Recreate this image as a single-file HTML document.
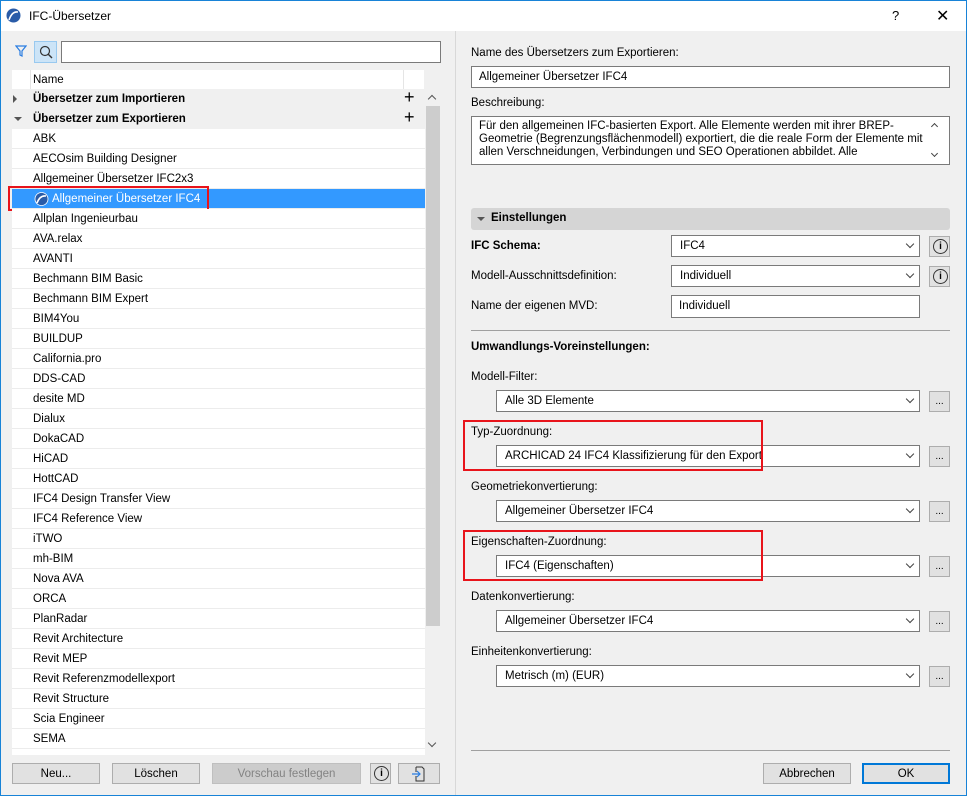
<!DOCTYPE html><html><head><meta charset="utf-8"><style>
*{box-sizing:border-box;margin:0;padding:0}
body{width:967px;height:796px;position:relative;overflow:hidden;font-family:"Liberation Sans",sans-serif;font-size:11.5px;color:#000;background:#f0f0f0}
.a{position:absolute}
.win{left:0;top:0;width:967px;height:796px;border:1px solid #1883d7}
.inp{position:absolute;background:#fff;border:1px solid #7a7a7a;padding-left:7px;line-height:21px;white-space:nowrap;overflow:hidden}
.sel{position:absolute;background:#fff;border:1px solid #7a7a7a;padding-left:8px;line-height:21px;white-space:nowrap}
.sel:after{content:"";position:absolute;right:6px;top:5px;width:5px;height:5px;border-right:1.3px solid #444;border-bottom:1.3px solid #444;transform:rotate(45deg)}
.btn{position:absolute;background:#e1e1e1;border:1px solid #adadad;text-align:center;line-height:20px}
.dots{position:absolute;width:21px;height:21px;background:#e1e1e1;border:1px solid #adadad;text-align:center;line-height:20px;font-size:10px}
.row{position:absolute;left:12px;width:413px;height:20px;background:#fff;border-bottom:1px solid #ececec;padding-left:21px;line-height:21px}
.lbl{position:absolute;left:471px}
.red{position:absolute;border:2px solid #e8141b}
.info{position:absolute;width:21px;height:21px;background:#e1e1e1;border:1px solid #adadad}
.info:after{content:"i";position:absolute;left:3px;top:2px;width:13px;height:13px;border:1.3px solid #333;border-radius:50%;font-size:10px;text-align:center;line-height:13px;font-weight:bold}
</style></head><body>
<div class="a win"></div>
<div class="a" style="left:1px;top:1px;width:965px;height:30px;background:#fff"></div>
<svg class="a" style="left:6px;top:8px" width="15" height="15"><circle cx="7.5" cy="7.5" r="7" fill="#2a5ca8"/><path d="M3 12 Q6 3 12 4" stroke="#fff" stroke-width="1.6" fill="none"/></svg>
<div class="a" style="left:29px;top:9px;font-size:12px">IFC-Übersetzer</div>
<div class="a" style="left:892px;top:8px;font-size:13px">?</div>
<div class="a" style="left:936px;top:6px;font-size:16px">✕</div>
<div class="a" style="left:455px;top:31px;width:1px;height:764px;background:#d8d8d8"></div>
<svg class="a" style="left:15px;top:45px" width="12" height="12"><path d="M1 1 H11 L7 6 V11 L5 10 V6 Z" fill="none" stroke="#2a7de1" stroke-width="1.2"/></svg>
<div class="a" style="left:34px;top:41px;width:23px;height:22px;background:#cce4f7;border:1px solid #99c9ef"></div>
<svg class="a" style="left:38px;top:45px" width="16" height="16"><circle cx="7" cy="6" r="4.5" fill="none" stroke="#333" stroke-width="1.2"/><path d="M10 9 L14 13" stroke="#333" stroke-width="1.4"/></svg>
<div class="a" style="left:61px;top:41px;width:380px;height:22px;background:#fff;border:1px solid #7a7a7a"></div>
<div class="a" style="left:12px;top:70px;width:412px;height:19px;background:#fff"></div>
<div class="a" style="left:30px;top:70px;width:1px;height:19px;background:#e5e5e5"></div>
<div class="a" style="left:403px;top:70px;width:1px;height:19px;background:#e5e5e5"></div>
<div class="a" style="left:33px;top:74px">Name</div>
<div class="a" style="left:12px;top:89px;width:413px;height:40px;background:#f0f0f0"></div>
<div class="a" style="left:13px;top:95px;width:0;height:0;border-left:4px solid #555;border-top:4px solid transparent;border-bottom:4px solid transparent"></div>
<div class="a" style="left:33px;top:93px;font-weight:bold">Übersetzer zum Importieren</div>
<div class="a" style="left:404px;top:87px;font-size:18px;font-weight:300">+</div>
<div class="a" style="left:14px;top:117px;width:0;height:0;border-top:4px solid #555;border-left:4px solid transparent;border-right:4px solid transparent"></div>
<div class="a" style="left:33px;top:113px;font-weight:bold">Übersetzer zum Exportieren</div>
<div class="a" style="left:404px;top:107px;font-size:18px;font-weight:300">+</div>
<div class="row" style="top:129px">ABK</div>
<div class="row" style="top:149px">AECOsim Building Designer</div>
<div class="row" style="top:169px">Allgemeiner Übersetzer IFC2x3</div>
<div class="row" style="top:189px;background:#3399ff;color:#fff;padding-left:40px">Allgemeiner Übersetzer IFC4</div>
<svg class="a" style="left:34px;top:192px" width="15" height="14"><circle cx="7.5" cy="7" r="6.5" fill="#2a5ca8" stroke="#fff" stroke-width=".8"/><path d="M3 11 Q6 3 12 4" stroke="#fff" stroke-width="1.6" fill="none"/></svg>
<div class="red" style="left:8px;top:186px;width:201px;height:25px"></div>
<div class="row" style="top:209px">Allplan Ingenieurbau</div>
<div class="row" style="top:229px">AVA.relax</div>
<div class="row" style="top:249px">AVANTI</div>
<div class="row" style="top:269px">Bechmann BIM Basic</div>
<div class="row" style="top:289px">Bechmann BIM Expert</div>
<div class="row" style="top:309px">BIM4You</div>
<div class="row" style="top:329px">BUILDUP</div>
<div class="row" style="top:349px">California.pro</div>
<div class="row" style="top:369px">DDS-CAD</div>
<div class="row" style="top:389px">desite MD</div>
<div class="row" style="top:409px">Dialux</div>
<div class="row" style="top:429px">DokaCAD</div>
<div class="row" style="top:449px">HiCAD</div>
<div class="row" style="top:469px">HottCAD</div>
<div class="row" style="top:489px">IFC4 Design Transfer View</div>
<div class="row" style="top:509px">IFC4 Reference View</div>
<div class="row" style="top:529px">iTWO</div>
<div class="row" style="top:549px">mh-BIM</div>
<div class="row" style="top:569px">Nova AVA</div>
<div class="row" style="top:589px">ORCA</div>
<div class="row" style="top:609px">PlanRadar</div>
<div class="row" style="top:629px">Revit Architecture</div>
<div class="row" style="top:649px">Revit MEP</div>
<div class="row" style="top:669px">Revit Referenzmodellexport</div>
<div class="row" style="top:689px">Revit Structure</div>
<div class="row" style="top:709px">Scia Engineer</div>
<div class="row" style="top:729px">SEMA</div>
<div class="a" style="left:12px;top:749px;width:413px;height:6px;background:#fff"></div>
<div class="a" style="left:425px;top:89px;width:16px;height:666px;background:#f0f0f0"></div>
<div class="a" style="left:426px;top:106px;width:14px;height:520px;background:#cdcdcd"></div>
<div class="a" style="left:429px;top:96px;width:6px;height:6px;border-left:1.3px solid #555;border-top:1.3px solid #555;transform:rotate(45deg)"></div>
<div class="a" style="left:429px;top:740px;width:6px;height:6px;border-right:1.3px solid #555;border-bottom:1.3px solid #555;transform:rotate(45deg)"></div>
<div class="btn" style="left:12px;top:763px;width:88px;height:21px">Neu...</div>
<div class="btn" style="left:112px;top:763px;width:88px;height:21px">Löschen</div>
<div class="btn" style="left:212px;top:763px;width:149px;height:21px;background:#cccccc;border-color:#bfbfbf;color:#838383">Vorschau festlegen</div>
<div class="info" style="left:370px;top:763px;height:21px"></div>
<div class="btn" style="left:398px;top:763px;width:42px;height:21px"></div>
<svg class="a" style="left:409px;top:765px" width="20" height="18"><path d="M7 2 H13 L15 4 V16 H7 V11 M7 7 V2" fill="none" stroke="#333"/><path d="M3 9 H11 M8 6 L11 9 L8 12" fill="none" stroke="#2a7de1" stroke-width="1.2"/></svg>
<div class="lbl" style="top:47px">Name des Übersetzers zum Exportieren:</div>
<div class="inp" style="left:471px;top:66px;width:479px;height:22px">Allgemeiner Übersetzer IFC4</div>
<div class="lbl" style="top:97px">Beschreibung:</div>
<div class="inp" style="left:471px;top:116px;width:479px;height:49px;line-height:13px;padding-top:3px;white-space:normal;padding-right:22px">Für den allgemeinen IFC-basierten Export. Alle Elemente werden mit ihrer BREP-Geometrie (Begrenzungsflächenmodell) exportiert, die die reale Form der Elemente mit allen Verschneidungen, Verbindungen und SEO Operationen abbildet. Alle</div>
<div class="a" style="left:932px;top:124px;width:5px;height:5px;border-left:1.2px solid #444;border-top:1.2px solid #444;transform:rotate(45deg)"></div>
<div class="a" style="left:932px;top:151px;width:5px;height:5px;border-right:1.2px solid #444;border-bottom:1.2px solid #444;transform:rotate(45deg)"></div>
<div class="a" style="left:471px;top:208px;width:479px;height:22px;background:#d5d5d5;border-radius:3px"></div>
<div class="a" style="left:477px;top:217px;border-top:4px solid #555;border-left:4px solid transparent;border-right:4px solid transparent"></div>
<div class="a" style="left:491px;top:212px;font-weight:bold">Einstellungen</div>
<div class="lbl" style="top:240px;font-weight:bold">IFC Schema:</div>
<div class="sel" style="left:671px;top:235px;width:249px;height:22px">IFC4</div>
<div class="info" style="left:929px;top:236px"></div>
<div class="lbl" style="top:270px">Modell-Ausschnittsdefinition:</div>
<div class="sel" style="left:671px;top:265px;width:249px;height:22px">Individuell</div>
<div class="info" style="left:929px;top:266px"></div>
<div class="lbl" style="top:300px">Name der eigenen MVD:</div>
<div class="inp" style="left:671px;top:295px;width:249px;height:23px">Individuell</div>
<div class="a" style="left:471px;top:330px;width:479px;height:1px;background:#a0a0a0"></div>
<div class="lbl" style="top:341px;font-weight:bold">Umwandlungs-Voreinstellungen:</div>
<div class="lbl" style="top:371px">Modell-Filter:</div>
<div class="sel" style="left:496px;top:390px;width:424px;height:22px">Alle 3D Elemente</div>
<div class="dots" style="left:929px;top:391px">...</div>
<div class="lbl" style="top:426px">Typ-Zuordnung:</div>
<div class="sel" style="left:496px;top:445px;width:424px;height:22px">ARCHICAD 24 IFC4 Klassifizierung für den Export</div>
<div class="dots" style="left:929px;top:446px">...</div>
<div class="red" style="left:463px;top:420px;width:300px;height:51px"></div>
<div class="lbl" style="top:481px">Geometriekonvertierung:</div>
<div class="sel" style="left:496px;top:500px;width:424px;height:22px">Allgemeiner Übersetzer IFC4</div>
<div class="dots" style="left:929px;top:501px">...</div>
<div class="lbl" style="top:536px">Eigenschaften-Zuordnung:</div>
<div class="sel" style="left:496px;top:555px;width:424px;height:22px">IFC4 (Eigenschaften)</div>
<div class="dots" style="left:929px;top:556px">...</div>
<div class="red" style="left:463px;top:530px;width:300px;height:51px"></div>
<div class="lbl" style="top:591px">Datenkonvertierung:</div>
<div class="sel" style="left:496px;top:610px;width:424px;height:22px">Allgemeiner Übersetzer IFC4</div>
<div class="dots" style="left:929px;top:611px">...</div>
<div class="lbl" style="top:646px">Einheitenkonvertierung:</div>
<div class="sel" style="left:496px;top:665px;width:424px;height:22px">Metrisch (m) (EUR)</div>
<div class="dots" style="left:929px;top:666px">...</div>
<div class="a" style="left:471px;top:750px;width:479px;height:1px;background:#a0a0a0"></div>
<div class="btn" style="left:763px;top:763px;width:88px;height:21px">Abbrechen</div>
<div class="btn" style="left:862px;top:763px;width:88px;height:21px;border:2px solid #0078d7;line-height:18px">OK</div>
</body></html>
